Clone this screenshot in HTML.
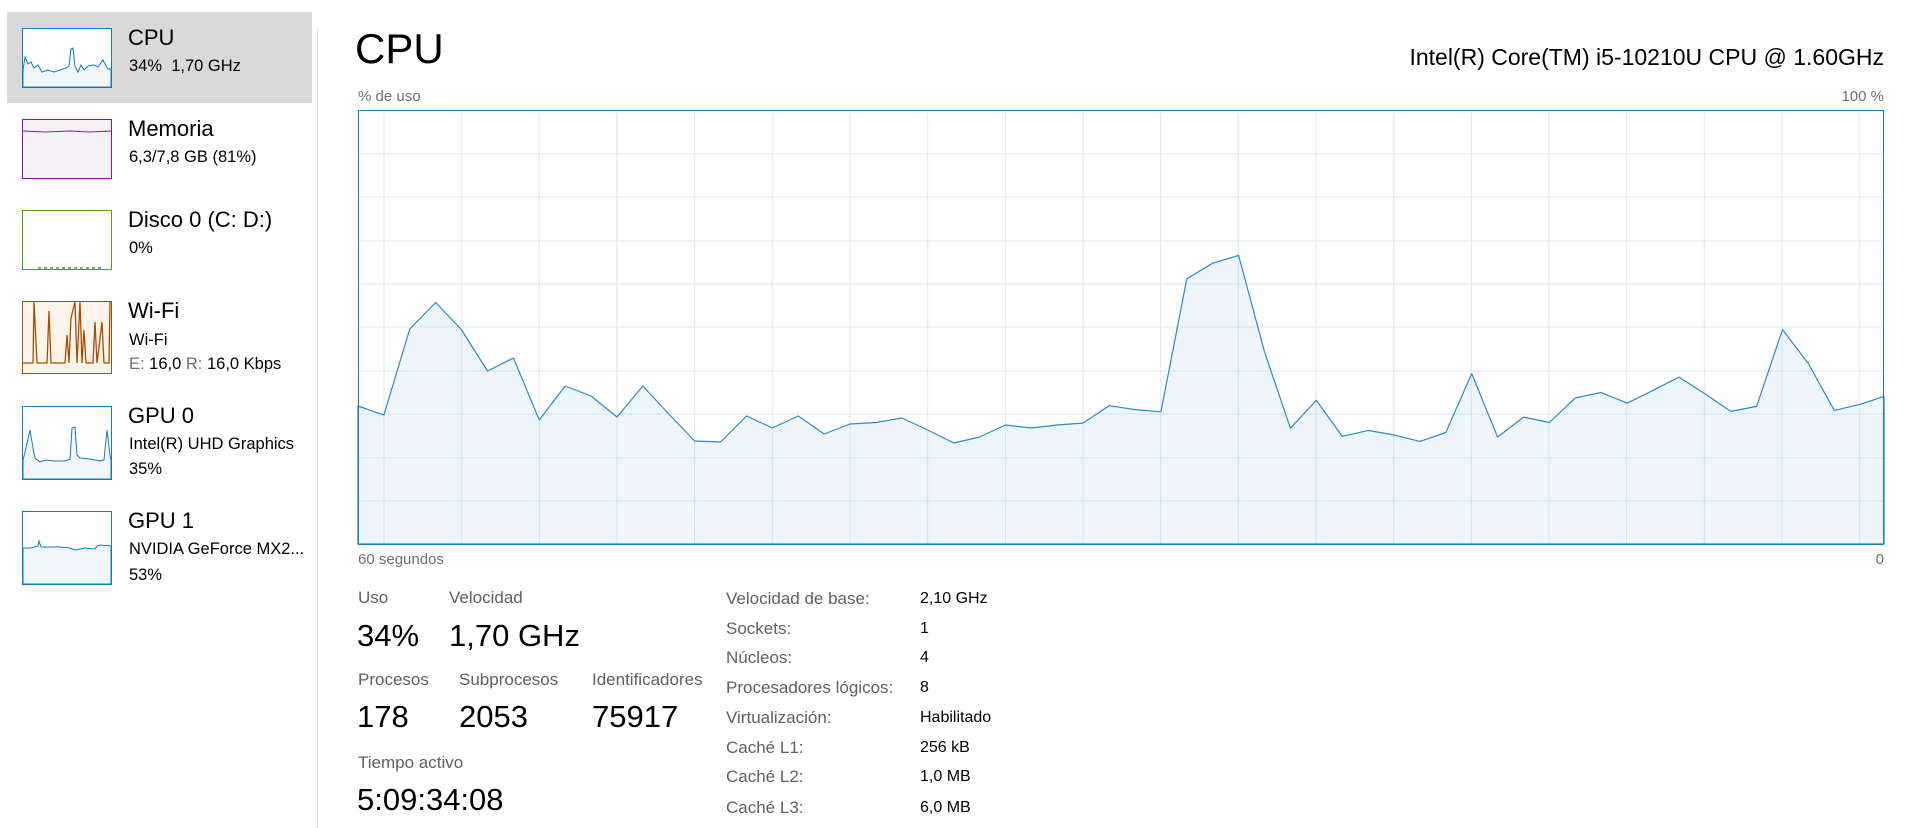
<!DOCTYPE html>
<html><head><meta charset="utf-8"><style>
html,body{margin:0;padding:0;background:#fff;width:1911px;height:828px;overflow:hidden;font-family:"Liberation Sans",sans-serif;color:#000}
.a{position:absolute;white-space:nowrap;line-height:1}
.t{font-size:22px}
.s{font-size:16.5px}
.g{color:#707070}
.lbl{font-size:17px;color:#606060}
.v{font-size:16px}
.big{font-size:31px}
</style></head><body>
<div class="a" style="left:7px;top:12px;width:305px;height:91px;background:#d9d9d9"></div>
<div class="a" style="left:317px;top:27px;width:1px;height:801px;background:#e6e6e6"></div>

<svg class="a" style="left:0;top:0" width="330" height="600" xmlns="http://www.w3.org/2000/svg">
 <rect x="22.5" y="28.5" width="89" height="59" fill="#fff" stroke="#117dbb"/>
 <polygon points="23,87 23,70 25,57 28,64 31,62 34,68 38,65 42,72 48,70 54,72 60,70 66,68 69,66 71,49 73,48 75,66 78,72 81,65 84,70 88,66 94,65 98,67 103,60 106,66 108,69 111,69 111,87" fill="#f1f6fa" stroke="#117dbb" stroke-width="1"/>
 <rect x="22.5" y="119.5" width="89" height="59" fill="#f4f2f4" stroke="#8b12ae"/>
 <polyline points="23,131 45,132 70,131 90,132 111,131" fill="none" stroke="#8b12ae"/>
 <rect x="22.5" y="210.5" width="89" height="59" fill="#fff" stroke="#4da60c"/>
 <polyline points="38,268 60,268 75,268 90,268 104,268" fill="none" stroke="#4da60c" stroke-width="1.5" stroke-dasharray="3 3"/>
 <rect x="22.5" y="301.5" width="89" height="72" fill="#fcf3eb" stroke="#a74f01"/>
 <polyline points="23,363 33,363 34,302 37,363 47,363 49,311 51,363 65,363 67,335 69,363 71,318 73,310 75,302 77,363 80,302 82,363 84,330 86,363 93,363 95,322 97,363 102,322 104,363 109,363 110,302" fill="none" stroke="#a74f01" stroke-width="1.3"/>
 <rect x="22.5" y="406.5" width="89" height="73" fill="#fff" stroke="#117dbb"/>
 <polygon points="23,479 23,460 26,448 30,430 33,448 35,458 40,462 45,460 55,461 65,461 70,459 72,428 75,427 77,455 80,458 90,459 100,461 104,460 107,430 110,455 111,460 111,479" fill="#f1f6fa" stroke="#117dbb"/>
 <rect x="22.5" y="511.5" width="89" height="73" fill="#fff" stroke="#117dbb"/>
 <polygon points="23,584 23,548 30,548 38,546 39,541 41,547 50,547 60,547 70,548 75,550 85,548 95,549 97,546 100,545 111,546 111,584" fill="#f1f6fa" stroke="#117dbb"/>
</svg>

<div class="a t" style="left:128px;top:27px">CPU</div>
<div class="a s" style="left:129px;top:58px">34%&nbsp; 1,70 GHz</div>
<div class="a t" style="left:128px;top:118px">Memoria</div>
<div class="a s" style="left:129px;top:149px">6,3/7,8 GB (81%)</div>
<div class="a t" style="left:128px;top:209px">Disco 0 (C: D:)</div>
<div class="a s" style="left:129px;top:240px">0%</div>
<div class="a t" style="left:128px;top:300px">Wi-Fi</div>
<div class="a s" style="left:129px;top:332px">Wi-Fi</div>
<div class="a s" style="left:129px;top:356px"><span class="g">E:</span> 16,0 <span class="g">R:</span> 16,0 Kbps</div>
<div class="a t" style="left:128px;top:405px">GPU 0</div>
<div class="a s" style="left:129px;top:436px">Intel(R) UHD Graphics</div>
<div class="a s" style="left:129px;top:461px">35%</div>
<div class="a t" style="left:128px;top:510px">GPU 1</div>
<div class="a s" style="left:129px;top:541px">NVIDIA GeForce MX2...</div>
<div class="a s" style="left:129px;top:567px">53%</div>

<div class="a" style="left:355px;top:28px;font-size:42px">CPU</div>
<div class="a" style="right:27px;top:46px;font-size:23px">Intel(R) Core(TM) i5-10210U CPU @ 1.60GHz</div>
<div class="a g" style="left:358px;top:89px;font-size:15px">% de uso</div>
<div class="a g" style="right:27px;top:89px;font-size:15px">100 %</div>
<div class="a g" style="left:358px;top:552px;font-size:15px">60 segundos</div>
<div class="a g" style="right:27px;top:552px;font-size:15px">0</div>

<svg class="a" style="left:0;top:0" width="1911" height="560" xmlns="http://www.w3.org/2000/svg">
 <g stroke="#d9eaf4" stroke-width="1">
  <line x1="358" y1="154" x2="1884" y2="154"/><line x1="358" y1="197" x2="1884" y2="197"/><line x1="358" y1="241" x2="1884" y2="241"/><line x1="358" y1="284" x2="1884" y2="284"/><line x1="358" y1="327" x2="1884" y2="327"/><line x1="358" y1="371" x2="1884" y2="371"/><line x1="358" y1="414" x2="1884" y2="414"/><line x1="358" y1="458" x2="1884" y2="458"/><line x1="358" y1="501" x2="1884" y2="501"/>
  <line x1="384" y1="110" x2="384" y2="544"/><line x1="461.7" y1="110" x2="461.7" y2="544"/><line x1="539.3" y1="110" x2="539.3" y2="544"/><line x1="617" y1="110" x2="617" y2="544"/><line x1="694.7" y1="110" x2="694.7" y2="544"/><line x1="772.3" y1="110" x2="772.3" y2="544"/><line x1="850" y1="110" x2="850" y2="544"/><line x1="927.7" y1="110" x2="927.7" y2="544"/><line x1="1005.3" y1="110" x2="1005.3" y2="544"/><line x1="1083" y1="110" x2="1083" y2="544"/><line x1="1160.7" y1="110" x2="1160.7" y2="544"/><line x1="1238.3" y1="110" x2="1238.3" y2="544"/><line x1="1316" y1="110" x2="1316" y2="544"/><line x1="1393.7" y1="110" x2="1393.7" y2="544"/><line x1="1471.3" y1="110" x2="1471.3" y2="544"/><line x1="1549" y1="110" x2="1549" y2="544"/><line x1="1626.7" y1="110" x2="1626.7" y2="544"/><line x1="1704.3" y1="110" x2="1704.3" y2="544"/><line x1="1782" y1="110" x2="1782" y2="544"/><line x1="1859.7" y1="110" x2="1859.7" y2="544"/>
 </g>
 <polygon fill="#1a7fc0" fill-opacity="0.07" stroke="#2b8ac9" stroke-width="1.2" stroke-linejoin="round" points="358,544 358,406 383.9,415 409.8,329 435.7,302.5 461.6,330 487.5,371 513.4,358 539.3,420 565.2,386 591.1,396 617,417 642.9,386 668.8,414 694.7,441 720.6,442 746.5,416 772.4,428 798.3,416 824.2,434 850.1,424 876,422.5 901.9,418 927.8,430 953.7,443 979.6,437 1005.5,425 1031.4,428 1057.3,425 1083.2,423 1109.1,405.7 1135,409.6 1160.9,411.8 1186.8,278.9 1212.7,263.2 1238.6,255.4 1264.5,351.8 1290.4,428.2 1316.3,400.4 1342.2,436.4 1368.1,430.4 1394,435 1419.9,441.4 1445.8,432.5 1471.7,373.6 1497.6,437.1 1523.5,417.1 1549.4,422.5 1575.3,397.9 1601.2,392.5 1627.1,403.2 1653,390.4 1678.9,377.1 1704.8,393.6 1730.7,411.4 1756.6,406.4 1782.5,329.6 1808.4,363.6 1834.3,410.4 1860.2,404.3 1884,396.4 1884,544"/>
 <rect x="358.5" y="110.5" width="1525" height="434" fill="none" stroke="#117dbb" stroke-width="1"/>
</svg>

<div class="a lbl" style="left:358px;top:589px">Uso</div>
<div class="a lbl" style="left:449px;top:589px">Velocidad</div>
<div class="a big" style="left:357px;top:620px">34%</div>
<div class="a big" style="left:449px;top:620px">1,70 GHz</div>
<div class="a lbl" style="left:358px;top:671px">Procesos</div>
<div class="a lbl" style="left:459px;top:671px">Subprocesos</div>
<div class="a lbl" style="left:592px;top:671px">Identificadores</div>
<div class="a big" style="left:357px;top:701px">178</div>
<div class="a big" style="left:459px;top:701px">2053</div>
<div class="a big" style="left:592px;top:701px">75917</div>
<div class="a lbl" style="left:358px;top:754px">Tiempo activo</div>
<div class="a big" style="left:357px;top:784px">5:09:34:08</div>

<div class="a lbl" style="left:726px;top:590px">Velocidad de base:</div><div class="a v" style="left:920px;top:591px">2,10 GHz</div>
<div class="a lbl" style="left:726px;top:620px">Sockets:</div><div class="a v" style="left:920px;top:621px">1</div>
<div class="a lbl" style="left:726px;top:649px">Núcleos:</div><div class="a v" style="left:920px;top:650px">4</div>
<div class="a lbl" style="left:726px;top:679px">Procesadores lógicos:</div><div class="a v" style="left:920px;top:680px">8</div>
<div class="a lbl" style="left:726px;top:709px">Virtualización:</div><div class="a v" style="left:920px;top:710px">Habilitado</div>
<div class="a lbl" style="left:726px;top:739px">Caché L1:</div><div class="a v" style="left:920px;top:740px">256 kB</div>
<div class="a lbl" style="left:726px;top:768px">Caché L2:</div><div class="a v" style="left:920px;top:769px">1,0 MB</div>
<div class="a lbl" style="left:726px;top:799px">Caché L3:</div><div class="a v" style="left:920px;top:800px">6,0 MB</div>
</body></html>
